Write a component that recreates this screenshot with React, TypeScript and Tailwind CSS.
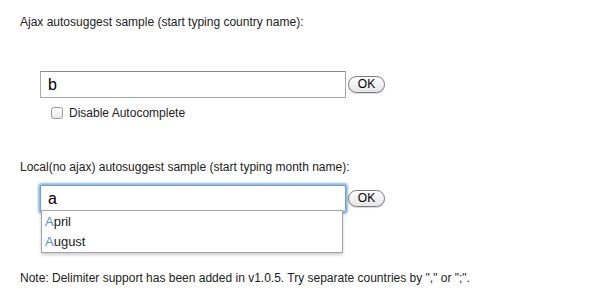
import React from "react";

export default function App() {
  return (
    <div className="w-[600px] h-[300px] bg-white text-[12px] text-[#222] pl-[20px] pt-[14px]" style={{ fontFamily: '"Liberation Sans", Arial, sans-serif' }}>
      <p className="leading-[16px]">Ajax autosuggest sample (start typing country name):</p>
      <div className="mt-[41px] ml-[20px] flex items-center">
        <div className="w-[306px] h-[27px] border border-[#a9a9a9] border-t-[#8a8a8a] bg-white flex items-center pl-[7px] text-[16px] text-black">b</div>
        <button className="ml-[2px] w-[37px] h-[17px] rounded-full border border-[#7a7a7a] bg-gradient-to-b from-white to-[#e6e6e6] text-[12px] leading-[15px] text-black shadow-[0_1px_1px_rgba(0,0,0,0.15)]">OK</button>
      </div>
      <div className="ml-[31px] mt-[9px] flex items-center h-[12px]">
        <span className="w-[12px] h-[12px] rounded-[3px] border border-[#9a9a9a] bg-gradient-to-b from-white to-[#e8e8e8]"></span>
        <span className="ml-[6px] leading-[12px]">Disable Autocomplete</span>
      </div>
      <p className="mt-[40px] leading-[16px]">Local(no ajax) autosuggest sample (start typing month name):</p>
      <div className="mt-[10px] ml-[20px] relative flex items-center">
        <div className="w-[306px] h-[27px] border border-[#6d9fd6] bg-white flex items-center pl-[7px] text-[16px] text-black shadow-[0_0_2px_2px_rgba(109,159,214,0.75)] rounded-[2px]">a</div>
        <button className="ml-[2px] w-[37px] h-[17px] rounded-full border border-[#7a7a7a] bg-gradient-to-b from-white to-[#e6e6e6] text-[12px] leading-[15px] text-black shadow-[0_1px_1px_rgba(0,0,0,0.15)]">OK</button>
        <div className="absolute left-[1px] top-[25px] w-[302px] h-[43px] border border-[#a4a4a4] bg-white shadow-[0_2px_3px_rgba(0,0,0,0.2)] text-[13px] text-[#222] pl-[3px] pt-[1px]">
          <div className="h-[20px] leading-[20px]"><span className="text-[#4f8fe6]">A</span>pril</div>
          <div className="h-[20px] leading-[20px]"><span className="text-[#4f8fe6]">A</span>ugust</div>
        </div>
      </div>
      <p className="mt-[58px] leading-[16px]">Note: Delimiter support has been added in v1.0.5. Try separate countries by "," or ";".</p>
    </div>
  );
}
